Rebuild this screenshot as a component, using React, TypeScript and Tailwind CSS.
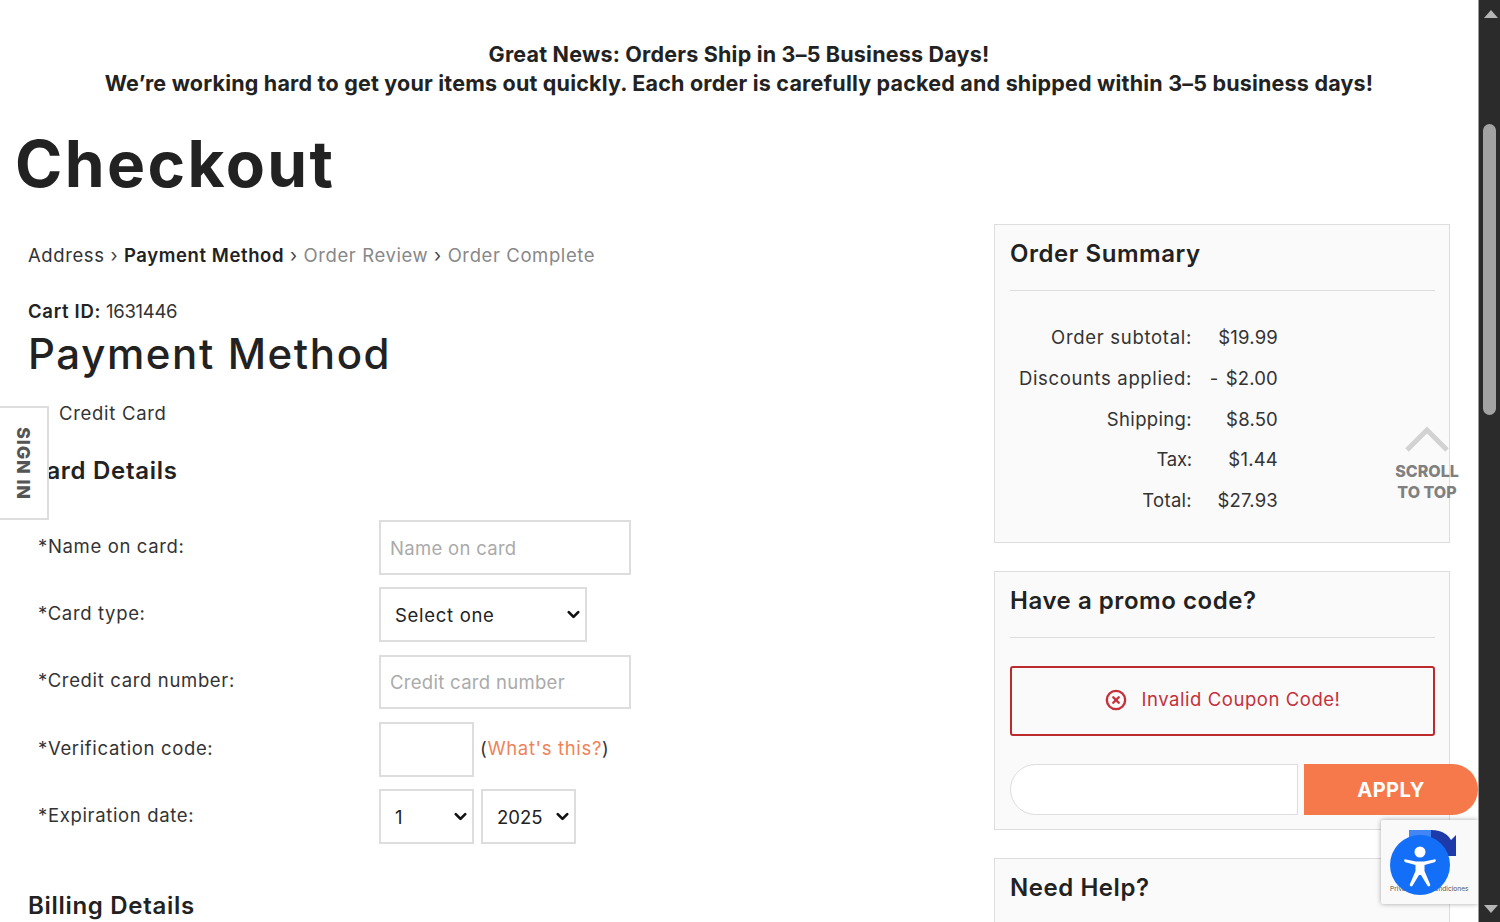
import { ChevronDown, CircleX } from 'lucide-react'

const font = "font-['Inter','Liberation_Sans',sans-serif]"

const summary = [
  { label: 'Order subtotal:', value: '$19.99', h: 'h-[41px]', spacing: 'tracking-[0.7px]' },
  { label: 'Discounts applied:', value: '-\u200a $2.00', h: 'h-[41px]', spacing: 'tracking-[0.65px]' },
  { label: 'Shipping:', value: '$8.50', h: 'h-[41px]', spacing: 'tracking-[0.35px]' },
  { label: 'Tax:', value: '$1.44', h: 'h-[40px]', spacing: 'tracking-[-0.2px]' },
  { label: 'Total:', value: '$27.93', h: 'h-[41px]', spacing: 'tracking-[0.3px]' },
]

function Label({ children }: { children: React.ReactNode }) {
  return <div className="w-[351px] pl-[10px] pb-[2px] text-[18.5px] tracking-[0.65px] text-[#333]">{children}</div>
}

function Card({ title, className, children }: { title: string; className: string; children?: React.ReactNode }) {
  return (
    <section className={`border border-[#ddd] bg-[#fafafa] pl-[15px] pr-[14px] ${className}`}>
      <h3 className="h-[66px] pt-[13px] border-b border-[#ddd] text-[24px] leading-[32px] tracking-[0.55px] font-semibold text-[#222]">{title}</h3>
      {children}
    </section>
  )
}

function NativeSelect({ value, width, spacing }: { value: string; width: string; spacing?: string }) {
  return (
    <div className={`relative h-[55px] ${width}`}>
      <select className={`appearance-none w-full h-full border-2 border-[#ddd] pl-[14px] pt-[2px] text-[18.5px] bg-white text-[#222] ${spacing ?? ''}`}>
        <option>{value}</option>
      </select>
      <ChevronDown size={19} strokeWidth={3.4} className="absolute top-[18px] right-[4px] text-[#111] pointer-events-none" />
    </div>
  )
}

function AccessWidget() {
  return (
    <div className="absolute left-[1381px] top-[820px] w-[97px] h-[84px] bg-[#f9f9f9] rounded-l-[2px] shadow-[0_0_5px_rgba(0,0,0,0.35)]">
      <svg viewBox="0 0 97 84" className="absolute inset-0 w-[97px] h-[84px]">
        <path d="M28 10 H50 C62 10 68 16 70 20 L75 15 V36 H54 L61 29 C57 23 52 20 44 20 H28 Z" fill="#1c3aa9" />
        <path d="M28 10 H50 V20 H28 Z" fill="#4285f4" />
      </svg>
      <div className="absolute left-[9px] top-[65px] w-[88px] text-[6.6px] leading-[9px] text-[#555] whitespace-nowrap">Privacidad - Condiciones</div>
      <div className="absolute left-[9px] top-[15px] w-[60px] h-[60px] rounded-full bg-[#146ff8] flex items-center justify-center">
        <svg viewBox="0 0 60 60" className="w-[60px] h-[60px]" fill="#fff">
          <circle cx="30" cy="17" r="5.5" />
          <path d="M16 24.5 C15 24 14.2 24.6 14.2 25.6 C14.2 26.4 14.8 27 15.5 27.2 L25.5 30 V36 L19.8 49.5 C19.3 51 21.5 52.2 22.5 50.8 L29 40 H31 L37.5 50.8 C38.5 52.2 40.7 51 40.2 49.5 L34.5 36 V30 L44.5 27.2 C45.2 27 45.8 26.4 45.8 25.6 C45.8 24.6 45 24 44 24.5 L34 26.5 H26 Z" />
        </svg>
      </div>
    </div>
  )
}

export default function App() {
  return (
    <div className={`flex w-[1500px] h-[922px] overflow-hidden bg-white text-[#222] ${font}`}>
      <main className="relative w-[1478px] h-[922px] overflow-hidden">
        {/* Shipping banner */}
        <div className="pt-[40px] h-[112px] text-center text-[21.5px] leading-[29px] tracking-[0.2px] font-bold text-[#222]">
          <p>Great News: Orders Ship in 3–5 Business Days!</p>
          <p>We’re working hard to get your items out quickly. Each order is carefully packed and shipped within 3–5 business days!</p>
        </div>

        <h1 className="pl-[15px] h-[112px] text-[64px] leading-[104px] tracking-[2.4px] font-bold text-[#222]">Checkout</h1>

        <div className="flex">
          {/* Payment form */}
          <div className="w-[994px] pl-[28px]">
            <nav className="pt-[19px] h-[75px] text-[18.5px] leading-[24px] tracking-[0.6px] text-[#333] whitespace-nowrap">
              Address <span className="text-[#444]">›</span> <b className="font-semibold text-[#222]">Payment Method</b> <span className="text-[#444]">›</span>{' '}
              <span className="text-[#888]">Order Review</span> <span className="text-[#444]">›</span> <span className="text-[#888]">Order Complete</span>
            </nav>
            <p className="h-[24px] text-[18.5px] leading-[24px] tracking-[-0.3px] text-[#333]"><b className="font-semibold tracking-[0.7px] text-[#222]">Cart ID:</b> 1631446</p>
            <h2 className="h-[77px] pt-[1px] text-[42px] leading-[60px] tracking-[1.6px] font-medium text-[#222]">Payment Method</h2>
            <p className="pl-[31px] h-[54px] text-[18.5px] leading-[24px] tracking-[0.7px] pt-[1px] text-[#333]">Credit Card</p>
            <h3 className="h-[66px] text-[24px] leading-[32px] tracking-[0.7px] pt-[1px] font-semibold text-[#222]">Card Details</h3>

            <div className="flex flex-col gap-[12px]">
              <div className="flex items-center">
                <Label>*Name on card:</Label>
                <input placeholder="Name on card" className="w-[252px] h-[55px] border-2 border-[#ddd] px-[9px] text-[18.5px] tracking-[0.3px] bg-white placeholder:text-[#aaa]" />
              </div>
              <div className="flex items-center">
                <Label>*Card type:</Label>
                <NativeSelect value="Select one" width="w-[208px]" spacing="tracking-[0.7px]" />
              </div>
              <div className="flex items-center mt-[1px]">
                <Label>*Credit card number:</Label>
                <input placeholder="Credit card number" className="w-[252px] h-[54px] border-2 border-[#ddd] px-[9px] text-[18.5px] tracking-[0.3px] bg-white placeholder:text-[#aaa]" />
              </div>
              <div className="flex items-center mt-[1px]">
                <Label>*Verification code:</Label>
                <input className="w-[95px] h-[55px] border-2 border-[#ddd] bg-white" />
                <span className="ml-[6px] pb-[2px] text-[18.5px] tracking-[0.65px] text-[#333]">(<span className="text-[#f0825a]">What's this?</span>)</span>
              </div>
              <div className="flex items-center">
                <Label>*Expiration date:</Label>
                <NativeSelect value="1" width="w-[95px]" />
                <div className="ml-[7px]">
                  <NativeSelect value="2025" width="w-[95px]" />
                </div>
              </div>
            </div>
            <h3 className="mt-[46px] text-[24px] leading-[32px] tracking-[0.7px] font-semibold text-[#222]">Billing Details</h3>
          </div>

          {/* Right column */}
          <aside className="w-[456px] flex flex-col gap-[28px]">
            <Card title="Order Summary" className="h-[319px]">
              <div className="pt-[26px]">
                {summary.map((row) => (
                  <div key={row.label} className={`flex items-center text-[18.5px] text-[#333] ${row.h}`}>
                    <div className={`w-[182px] text-right whitespace-nowrap ${row.spacing}`}>{row.label}</div>
                    <div className="w-[86px] text-right whitespace-nowrap tracking-[0.2px]">{row.value}</div>
                  </div>
                ))}
              </div>
            </Card>
            <Card title="Have a promo code?" className="h-[259px]">
              <div className="mt-[28px] h-[70px] pb-[2px] border-2 border-[#bd2a2e] rounded-[3px] flex items-center justify-center gap-[15px] text-[18.5px] tracking-[0.55px] text-[#c5303a]">
                <CircleX size={22} strokeWidth={2.6} />
                <span>Invalid Coupon Code!</span>
              </div>
              <div className="mt-[28px] flex">
                <input className="w-[288px] h-[51px] shrink-0 rounded-l-full border-[1.5px] border-[#ddd] bg-white" />
                <button className="ml-[6px] w-[174px] h-[51px] shrink-0 rounded-r-full bg-[#f5794a] text-white text-[20px] tracking-[0.5px] font-bold">APPLY</button>
              </div>
            </Card>
            <Card title="Need Help?" className="h-[200px]" />
          </aside>
        </div>

        {/* Floating tabs */}
        <div className="absolute left-0 top-[406px] w-[49px] h-[114px] bg-white border-2 border-l-0 border-[#ddd] flex items-center justify-center">
          <span className="rotate-90 whitespace-nowrap text-[18px] tracking-[0.8px] font-extrabold text-[#555]">SIGN IN</span>
        </div>
        <div className="absolute left-[1389px] top-[425px] w-[76px] flex flex-col items-center text-[#808080]">
          <svg viewBox="0 0 44 27" className="w-[44px] h-[27px]" fill="none" stroke="#d2d2d2" strokeWidth="5">
            <path d="M2 25 L22 5 L42 25" />
          </svg>
          <span className="mt-[9px] text-[16px] leading-[21px] font-extrabold text-center">SCROLL<br />TO TOP</span>
        </div>
        <AccessWidget />
      </main>

      {/* Scrollbar */}
      <div className="relative w-[22px] h-[922px] bg-[#2b2b2b] border-l border-[#999]">
        <div className="absolute left-[5px] top-[10px] w-0 h-0 border-x-[7px] border-x-transparent border-b-[8px] border-b-[#b5b5b5]" />
        <div className="absolute left-[4px] top-[124px] w-[13px] h-[291px] rounded-full bg-[#a3a3a3]" />
        <div className="absolute left-[5px] top-[905px] w-0 h-0 border-x-[7px] border-x-transparent border-t-[8px] border-t-[#b5b5b5]" />
      </div>
    </div>
  )
}
